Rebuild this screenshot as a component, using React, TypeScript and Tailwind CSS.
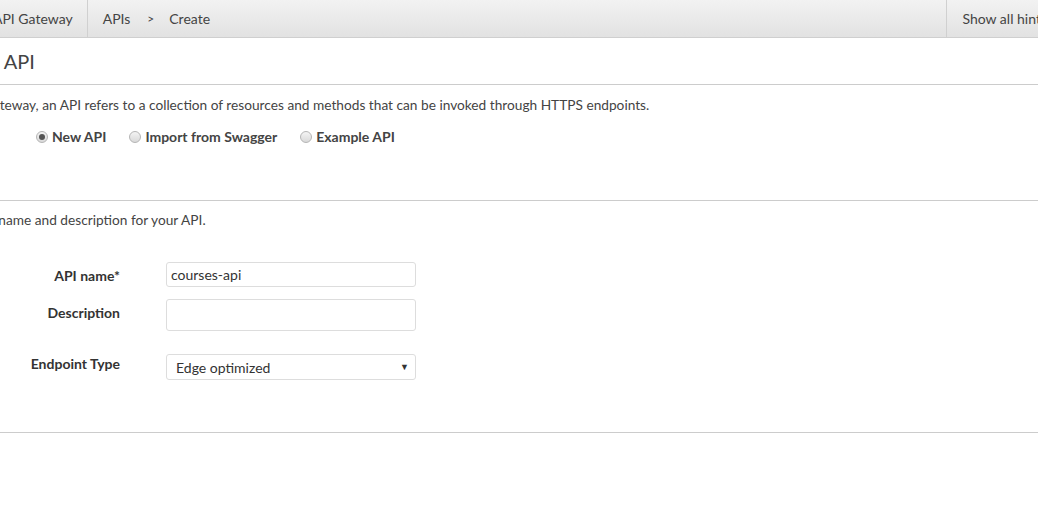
import React from "react";

function Radio({ checked }: { checked?: boolean }) {
  return (
    <span className="relative inline-flex h-[12px] w-[12px] items-center justify-center rounded-full border border-[#b5b5b5] bg-gradient-to-b from-[#f4f4f4] to-[#d9d9d9]">
      {checked && <span className="h-[6px] w-[6px] rounded-full bg-[#555]" />}
    </span>
  );
}

function Field({
  label,
  children,
  className,
  labelClass,
}: {
  label: string;
  children: React.ReactNode;
  className?: string;
  labelClass?: string;
}) {
  return (
    <div className={"flex items-start " + (className ?? "")}>
      <label className={"w-[245px] text-right text-[14px] font-bold leading-[20px] text-[#333] " + (labelClass ?? "")}>{label}</label>
      <div className="ml-[46px]">{children}</div>
    </div>
  );
}

export default function App() {
  return (
    <div className="h-[508px] w-[1038px] overflow-hidden bg-white font-['Lato',sans-serif] text-[#444]">
      <div className="-ml-[125px] w-[1187px]">
        <header className="flex h-[38px] items-center border-b border-[#cfcfcf] bg-gradient-to-b from-[#f2f2f2] to-[#e2e2e2] text-[14px]">
          <div className="flex h-full items-center border-r border-[#d0d0d0] pl-[65px] pr-[14px]">Amazon API Gateway</div>
          <nav className="flex items-center pl-[15px]">
            <span>APIs</span>
            <span className="pl-[17px] pr-[15px] text-[12px]">&gt;</span>
            <span>Create</span>
          </nav>
          <div className="ml-auto flex h-full items-center whitespace-nowrap border-l border-[#d0d0d0] pl-[15px] pr-[15px]">Show all hints</div>
        </header>

        <h1 className="border-b border-[#ccc] pb-[11px] pl-[24px] pt-[11px] text-[20px] font-normal leading-[24px]">Create new API</h1>

        <p className="pl-[17px] pt-[10px] text-[13.7px] leading-[20px]">
          In Amazon API Gateway, an API refers to a collection of resources and methods that can be invoked through HTTPS endpoints.
        </p>

        <div className="flex items-center gap-[4px] pl-[161px] pt-[11px] text-[14px] font-bold">
          <Radio checked />
          <span className="mr-[19px]">New API</span>
          <Radio />
          <span className="mr-[19px]">Import from Swagger</span>
          <Radio />
          <span>Example API</span>
        </div>

        <div className="mt-[53px] border-t border-[#ccc] pl-[15px] pt-[9px] text-[13.7px] leading-[20px]">
          Choose a friendly name and description for your API.
        </div>

        <div className="pt-[32px]">
          <Field label="API name*" labelClass="pt-[4px]">
            <input
              readOnly
              value="courses-api"
              className="h-[25px] w-[250px] rounded-[3px] border border-[#ddd] px-[4px] text-[14px] text-[#333] outline-none"
            />
          </Field>
          <Field label="Description" className="mt-[12px]" labelClass="pt-[4px]">
            <input readOnly value="" className="h-[32px] w-[250px] rounded-[3px] border border-[#ddd] px-[4px] text-[14px] outline-none" />
          </Field>
          <Field label="Endpoint Type" className="mt-[23px]">
            <div className="flex h-[26px] w-[250px] items-center justify-between rounded-[3px] border border-[#ddd] pl-[9px] pr-[6px] text-[14px] text-[#333]">
              <span>Edge optimized</span>
              <span className="text-[9px] text-[#333]">▼</span>
            </div>
          </Field>
        </div>

        <div className="mt-[52px] border-t border-[#ccc]" />
      </div>
    </div>
  );
}
